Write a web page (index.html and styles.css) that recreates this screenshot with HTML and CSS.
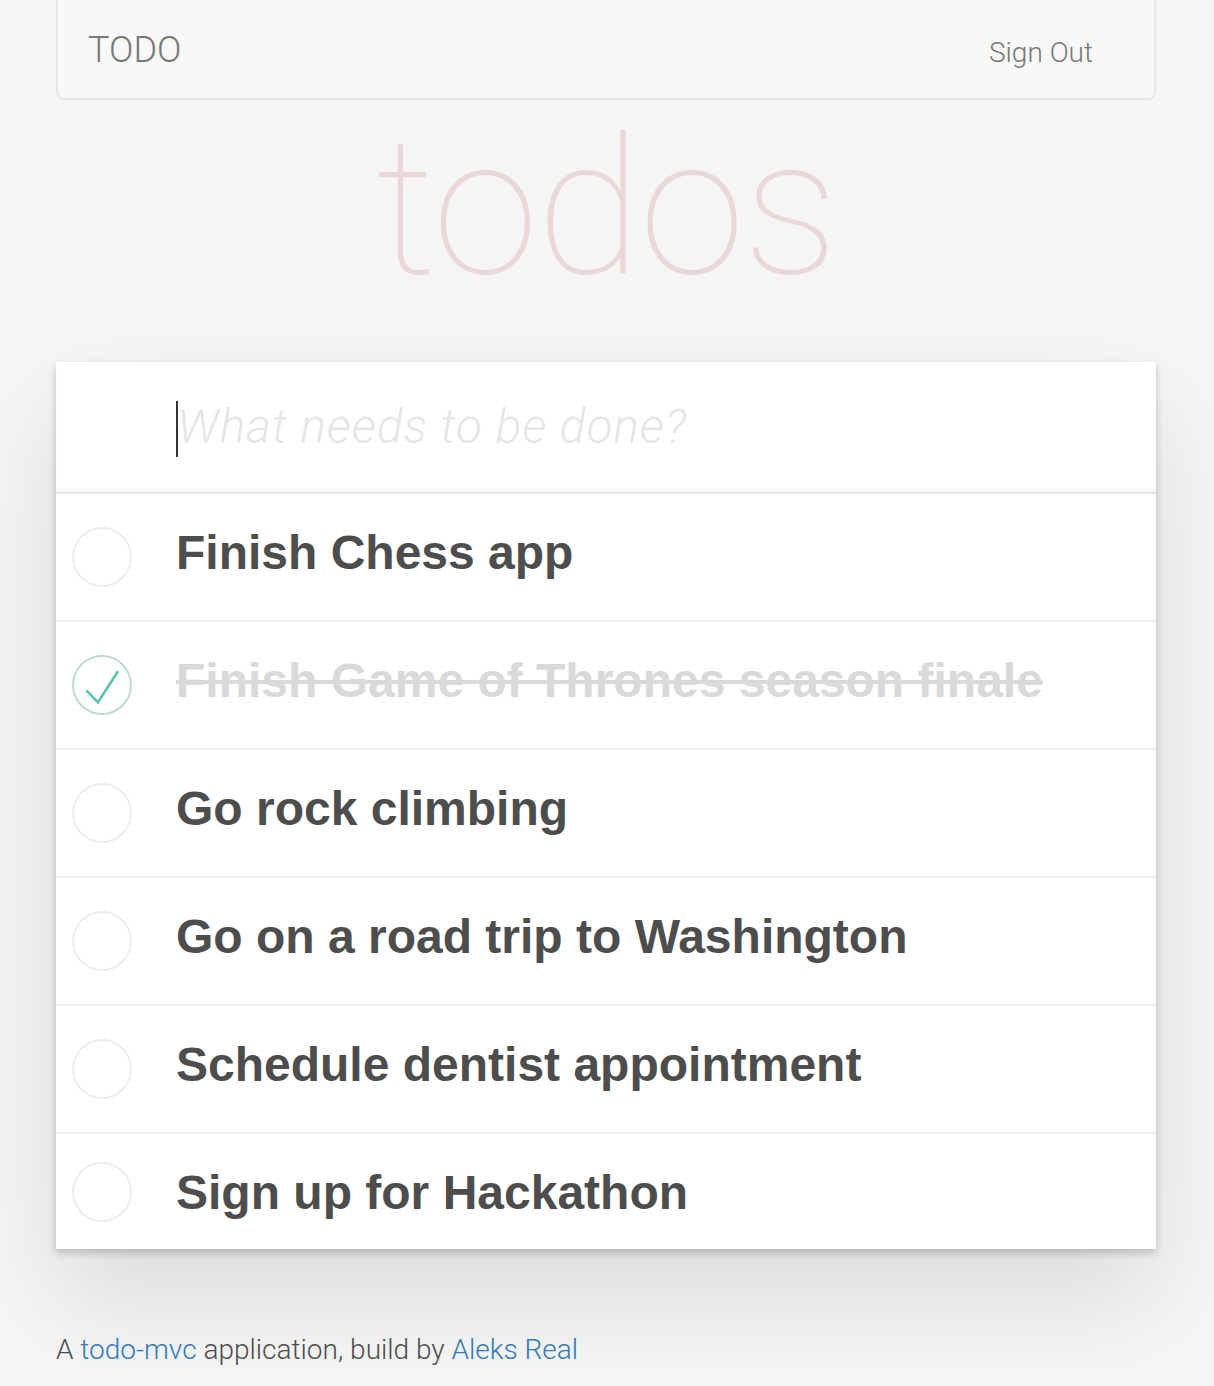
FILE: index.html
```html
<!DOCTYPE html>
<html lang="en">
<head>
<meta charset="utf-8">
<title>TODO</title>
<link rel="stylesheet" href="styles.css">
</head>
<body>
<div class="page">
  <nav class="navbar">
    <span class="brand">TODO</span>
    <a class="signout" href="#">Sign Out</a>
  </nav>
  <h1 class="title">todos</h1>
  <section class="todoapp">
    <div class="new-todo"><span class="caret"></span><span class="placeholder">What needs to be done?</span></div>
    <ul class="todo-list">
      <li class="todo">
        <svg class="toggle" viewBox="0 0 60 60"><circle cx="30" cy="30" r="29" class="ring"/></svg>
        <span class="label">Finish Chess app</span>
      </li>
      <li class="todo done">
        <svg class="toggle" viewBox="0 0 60 60"><circle cx="30" cy="30" r="29" class="ring"/><polyline points="14.3,35.3 26,47.3 46,16.3" class="check"/></svg>
        <span class="label">Finish Game of Thrones season finale</span>
      </li>
      <li class="todo">
        <svg class="toggle" viewBox="0 0 60 60"><circle cx="30" cy="30" r="29" class="ring"/></svg>
        <span class="label">Go rock climbing</span>
      </li>
      <li class="todo">
        <svg class="toggle" viewBox="0 0 60 60"><circle cx="30" cy="30" r="29" class="ring"/></svg>
        <span class="label">Go on a road trip to Washington</span>
      </li>
      <li class="todo">
        <svg class="toggle" viewBox="0 0 60 60"><circle cx="30" cy="30" r="29" class="ring"/></svg>
        <span class="label">Schedule dentist appointment</span>
      </li>
      <li class="todo last">
        <svg class="toggle" viewBox="0 0 60 60"><circle cx="30" cy="30" r="29" class="ring"/></svg>
        <span class="label">Sign up for Hackathon</span>
      </li>
    </ul>
  </section>
  <p class="info">A <a href="#">todo-mvc</a> application, build by <a href="#">Aleks Real</a></p>
</div>
</body>
</html>
```

FILE: styles.css
```css
* { box-sizing: border-box; }

html, body {
  margin: 0;
  padding: 0;
}

body {
  background: #f5f5f5;
  font-family: Roboto, "Liberation Sans", Arial, sans-serif;
  color: #4d4d4d;
  overflow: hidden;
}

.page {
  width: 1100px;
  margin: 0 0 0 56px;
}

.navbar {
  height: 100px;
  display: flex;
  align-items: baseline;
  justify-content: space-between;
  padding: 30px 61px 0 30px;
  background: #f8f8f8;
  border: 2px solid #e7e7e7;
  border-top: 0;
  border-radius: 0 0 8px 8px;
}

.brand {
  font-size: 36px;
  font-weight: 300;
  line-height: 40px;
  color: #777;
}

.signout {
  font-size: 28px;
  font-weight: 300;
  line-height: 38px;
  color: #777;
  text-decoration: none;
}

.title {
  margin: 0;
  height: 262px;
  padding-top: 8px;
  text-align: center;
  font-family: Roboto, "Liberation Sans", sans-serif;
  font-weight: 100;
  font-size: 192px;
  line-height: 200px;
  letter-spacing: -2px;
  color: rgba(175, 47, 47, 0.15);
}

.todoapp {
  background: #fff;
  box-shadow: 0 4px 8px 0 rgba(0, 0, 0, 0.2), 0 50px 100px 0 rgba(0, 0, 0, 0.1);
}

.new-todo {
  height: 130px;
  padding: 32px 32px 32px 120px;
  font-size: 48px;
  line-height: 66px;
  box-shadow: inset 0 -4px 2px rgba(0, 0, 0, 0.03);
  white-space: nowrap;
}

.caret {
  display: inline-block;
  width: 2px;
  height: 56px;
  margin-right: -1px;
  background: #333;
  vertical-align: -14px;
}

.placeholder {
  font-style: italic;
  font-weight: 300;
  letter-spacing: 0.9px;
  color: #e6e6e6;
}

.todo-list {
  list-style: none;
  margin: 0;
  padding: 0;
  border-top: 2px solid #e6e6e6;
}

.todo {
  display: flex;
  align-items: center;
  border-bottom: 2px solid #ededed;
}

.todo.last {
  border-bottom: 0;
}

.toggle {
  flex: none;
  width: 60px;
  height: 60px;
  margin: 0 44px 0 16px;
}

.ring {
  fill: none;
  stroke: #ededed;
  stroke-width: 2;
}

.done .ring {
  stroke: #bddad5;
}

.check {
  fill: none;
  stroke: #5dc2af;
  stroke-width: 2.6;
}

.label {
  padding: 30px 0 38px;
  font-family: "Liberation Sans", Arial, sans-serif;
  font-weight: 700;
  font-size: 48px;
  line-height: 58px;
  color: #4d4d4d;
  white-space: nowrap;
}

.last .label {
  padding-bottom: 27px;
}

.done .label {
  color: #d9d9d9;
  text-decoration: line-through;
}

.info {
  margin: 81px 0 0;
  font-size: 28px;
  font-weight: 300;
  line-height: 40px;
  color: #4d4d4d;
}

.info a {
  color: #337ab7;
  text-decoration: none;
}
```
